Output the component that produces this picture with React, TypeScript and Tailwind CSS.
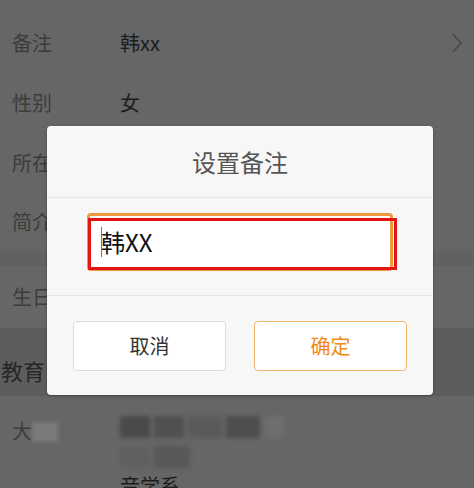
import { FC } from 'react'

const font = { fontFamily: '"Noto Sans CJK SC", "Noto Sans", sans-serif' }

const Row: FC<{ label: string; value?: string; chevron?: boolean; h?: string }> = ({
  label,
  value,
  chevron,
  h = 'h-[60px]',
}) => (
  <div className={`flex items-center ${h} relative`}>
    <span className="w-[120px] pl-[12px] text-[20px] text-[#3c3c3c]">{label}</span>
    <span className="text-[20px] text-[#1c1c1c]">{value}</span>
    {chevron && (
      <svg className="absolute right-[11px] top-1/2 -translate-y-1/2" width="12" height="22" viewBox="0 0 12 22">
        <path d="M2 2 L10 11 L2 20" fill="none" stroke="#4a4a4a" strokeWidth="1.6" />
      </svg>
    )}
  </div>
)

const App: FC = () => {
  return (
    <div className="relative w-[474px] h-[488px] overflow-hidden bg-[#666666]" style={font}>
      {/* page behind the overlay */}
      <div className="flex flex-col pt-[13px]">
        <Row label="备注" value="韩xx" chevron />
        <Row label="性别" value="女" />
        <Row label="所在地" />
        <Row label="简介" h="h-[58px]" />
        <div className="h-[15px] bg-[#616161]" />
        <Row label="生日" h="h-[62px]" />
        <div className="h-[68px] bg-[#5d5d5d] flex items-center pt-[16px]">
          <span className="text-[22px] text-[#262626] pl-[1px]">教育</span>
        </div>
        <div className="flex pt-[20px]">
          <div className="w-[120px] pl-[12px] flex items-start">
            <span className="text-[20px] text-[#3c3c3c]">大</span>
            <span className="mt-[6px] w-[26px] h-[20px] bg-[#7a7a7a] blur-[2px]" />
          </div>
          <div className="flex flex-col gap-[8px]">
            <div className="flex gap-[4px] blur-[2px]">
              <span className="w-[30px] h-[22px] bg-[#4a4a4a]" />
              <span className="w-[30px] h-[22px] bg-[#505050]" />
              <span className="w-[34px] h-[22px] bg-[#5a5a5a]" />
              <span className="w-[34px] h-[22px] bg-[#4e4e4e]" />
              <span className="w-[20px] h-[22px] bg-[#6e6e6e]" />
            </div>
            <div className="flex gap-[4px] blur-[2px]">
              <span className="w-[30px] h-[22px] bg-[#606060]" />
              <span className="w-[36px] h-[22px] bg-[#585858]" />
            </div>
            <span className="text-[20px] text-[#1c1c1c] leading-none">音学系</span>
          </div>
        </div>
      </div>

      {/* dialog */}
      <div className="absolute left-[47px] top-[126px] w-[386px] h-[269px] bg-[#f7f7f7] rounded-[4px] shadow-[0_1px_3px_rgba(0,0,0,0.3)] flex flex-col">
        <div className="h-[71px] flex items-center justify-center text-[24px] text-[#555555]">设置备注</div>
        <div className="h-px bg-[#e6e6e6]" />
        <div className="h-[97px] flex items-start pt-[15px] pl-[40px]">
          <div className="relative w-[306px] h-[58px] rounded-[4px] border-[3px] border-[#f09a3e] bg-white flex items-center pl-[11px]">
            <span className="w-px h-[30px] bg-[#777777] mr-[-1px]" />
            <span className="text-[24px] text-[#111111]">韩XX</span>
            <div className="absolute left-[-2px] top-[2px] w-[309px] h-[52px] border-[3px] border-[#e41515]" />
          </div>
        </div>
        <div className="h-px bg-[#e6e6e6]" />
        <div className="flex-1 flex items-start pt-[25px] pl-[26px] gap-[28px]">
          <button className="w-[153px] h-[50px] bg-white border border-[#dcdcdc] rounded-[4px] text-[20px] text-[#333333]">
            取消
          </button>
          <button className="w-[153px] h-[50px] bg-white border border-[#f3b56e] rounded-[4px] text-[20px] text-[#f08a14]">
            确定
          </button>
        </div>
      </div>
    </div>
  )
}

export default App
